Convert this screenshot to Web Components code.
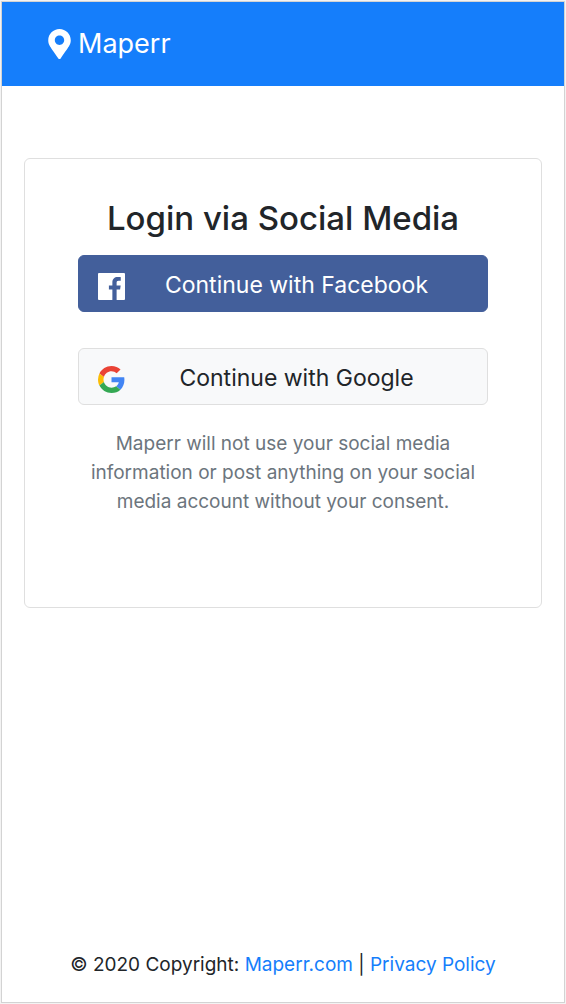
<!DOCTYPE html>
<html lang="en">
<head>
<meta charset="utf-8">
<meta name="viewport" content="width=device-width, initial-scale=1">
<title>Maperr</title>
<style>
  html, body {
    margin: 0;
    background: #f3f3f3;
  }
  body {
    font-family: Inter, "Liberation Sans", sans-serif;
    color: #212529;
  }
</style>
</head>
<body>
<maperr-app>
  <maperr-navbar slot="header" href="#home">Maperr</maperr-navbar>
  <maperr-login-card heading="Login via Social Media">
    <maperr-social-button provider="facebook">Continue with Facebook</maperr-social-button>
    <maperr-social-button provider="google">Continue with Google</maperr-social-button>
    <span slot="note">Maperr will not use your social media information or post anything on your social media account without your consent.</span>
  </maperr-login-card>
  <maperr-footer slot="footer"></maperr-footer>
</maperr-app>

<script>
const providerIcons = {
  facebook: `<svg viewBox="0 0 28 28" aria-hidden="true">
    <path fill="#fff" d="M1 0h26a1 1 0 0 1 1 1v26a1 1 0 0 1-1 1h-7.7V17.2h3.6l.6-4.3h-4.2v-2.7c0-1.2.4-2.1 2.1-2.1h2.2V4.3c-.4-.1-1.7-.2-3.2-.2-3.3 0-5.5 2-5.5 5.6v3.2h-3.6v4.3h3.6V28H1a1 1 0 0 1-1-1V1a1 1 0 0 1 1-1z"/>
  </svg>`,
  google: `<svg viewBox="0 0 48 48" aria-hidden="true">
    <path fill="#ea4335" d="M24 9.5c3.54 0 6.71 1.22 9.21 3.6l6.85-6.85C35.9 2.38 30.47 0 24 0 14.62 0 6.51 5.38 2.56 13.22l7.98 6.19C12.43 13.72 17.74 9.5 24 9.5z"/>
    <path fill="#4285f4" d="M46.98 24.55c0-1.57-.15-3.09-.38-4.55H24v9.02h12.94c-.58 2.96-2.26 5.48-4.78 7.18l7.73 6c4.51-4.18 7.09-10.36 7.09-17.65z"/>
    <path fill="#fbbc05" d="M10.53 28.59A14.5 14.5 0 0 1 9.77 24c0-1.6.27-3.14.76-4.59l-7.98-6.19A23.9 23.9 0 0 0 0 24c0 3.88.92 7.54 2.56 10.78l7.97-6.19z"/>
    <path fill="#34a853" d="M24 48c6.48 0 11.93-2.13 15.89-5.81l-7.73-6c-2.15 1.45-4.92 2.3-8.16 2.3-6.26 0-11.57-4.22-13.47-9.91l-7.98 6.19C6.51 42.62 14.62 48 24 48z"/>
  </svg>`,
};

class MaperrApp extends HTMLElement {
  constructor() {
    super();
    this.attachShadow({ mode: 'open' }).innerHTML = `<style>
    :host {
      display: flex;
      flex-direction: column;
      box-sizing: border-box;
      min-height: calc(100vh - 2px);
      margin: 1px;
      border: 1px solid #d3d3d3;
      background: #fff;
    }
    main {
      flex: 1;
      padding: 72px 22px;
    }
  </style>
  <slot name="header"></slot>
  <main><slot></slot></main>
  <slot name="footer"></slot>
  `;
  }
}
customElements.define('maperr-app', MaperrApp);

class MaperrNavbar extends HTMLElement {
  constructor() {
    super();
    this.attachShadow({ mode: 'open' }).innerHTML = `<style>
    :host {
      display: block;
      background: #157efb;
    }
    nav {
      display: flex;
      padding: 20px 46px;
    }
    a {
      display: inline-flex;
      align-items: center;
      gap: 7px;
      color: #fff;
      font-size: 27px;
      line-height: 44px;
      text-decoration: none;
    }
    svg {
      width: 23px;
      height: 30px;
    }
  </style>
  <nav>
    <a>
      <svg viewBox="0 0 384 512" aria-hidden="true"><path fill="currentColor" d="M172.27 501.67C26.97 291.03 0 269.41 0 192 0 85.96 85.96 0 192 0s192 85.96 192 192c0 77.41-26.97 99.03-172.27 309.67-9.53 13.77-29.93 13.77-39.46 0zM192 272c44.18 0 80-35.82 80-80s-35.82-80-80-80-80 35.82-80 80 35.82 80 80 80z"/></svg>
      <slot></slot>
    </a>
  </nav>
  `;
  }
  connectedCallback() {
    this.shadowRoot.querySelector('a').href = this.getAttribute('href') || '#';
  }
}
customElements.define('maperr-navbar', MaperrNavbar);

class MaperrLoginCard extends HTMLElement {
  constructor() {
    super();
    this.attachShadow({ mode: 'open' }).innerHTML = `<style>
    :host {
      display: block;
      border: 1px solid #dfdfdf;
      border-radius: 6px;
      padding: 36px 53px 91px;
      text-align: center;
    }
    h1 {
      margin: 0 0 14px;
      font-size: 33px;
      line-height: 46px;
      font-weight: 500;
    }
    .buttons {
      display: grid;
      gap: 36px;
    }
    p {
      margin: 24px 0 0;
      color: #6c757d;
      font-size: 19px;
      line-height: 29px;
    }
  </style>
  <h1></h1>
  <div class="buttons"><slot></slot></div>
  <p><slot name="note"></slot></p>
  `;
  }
  connectedCallback() {
    this.shadowRoot.querySelector('h1').textContent = this.getAttribute('heading');
  }
}
customElements.define('maperr-login-card', MaperrLoginCard);

class MaperrSocialButton extends HTMLElement {
  constructor() {
    super();
    this.attachShadow({ mode: 'open' }).innerHTML = `<style>
    :host {
      display: block;
    }
    button {
      display: flex;
      align-items: center;
      width: 100%;
      padding: 12px 19px 8px;
      border: 1px solid #dfdfdf;
      border-radius: 6px;
      background: #f8f9fa;
      color: #212529;
      font: inherit;
      font-size: 23px;
      line-height: 35px;
      cursor: pointer;
    }
    :host([provider='facebook']) button {
      border-color: #435f9b;
      background: #435f9b;
      color: #fff;
    }
    .icon {
      display: flex;
      padding-top: 2px;
    }
    svg {
      width: 27px;
      height: 27px;
    }
    .label {
      flex: 1;
    }
  </style>
  <button type="button">
    <span class="icon"></span>
    <span class="label"><slot></slot></span>
  </button>
  `;
  }
  connectedCallback() {
    this.shadowRoot.querySelector('.icon').innerHTML =
      providerIcons[this.getAttribute('provider')] || '';
  }
}
customElements.define('maperr-social-button', MaperrSocialButton);

class MaperrFooter extends HTMLElement {
  constructor() {
    super();
    this.attachShadow({ mode: 'open' }).innerHTML = `<style>
    :host {
      display: block;
      padding: 23px;
      text-align: center;
      font-size: 19px;
      line-height: 29px;
    }
    a {
      color: #157efb;
      text-decoration: none;
    }
  </style>
  <footer>© 2020 Copyright: <a href="#home">Maperr.com</a> | <a href="#privacy">Privacy Policy</a></footer>
  `;
  }
}
customElements.define('maperr-footer', MaperrFooter);
</script>
</body>
</html>
